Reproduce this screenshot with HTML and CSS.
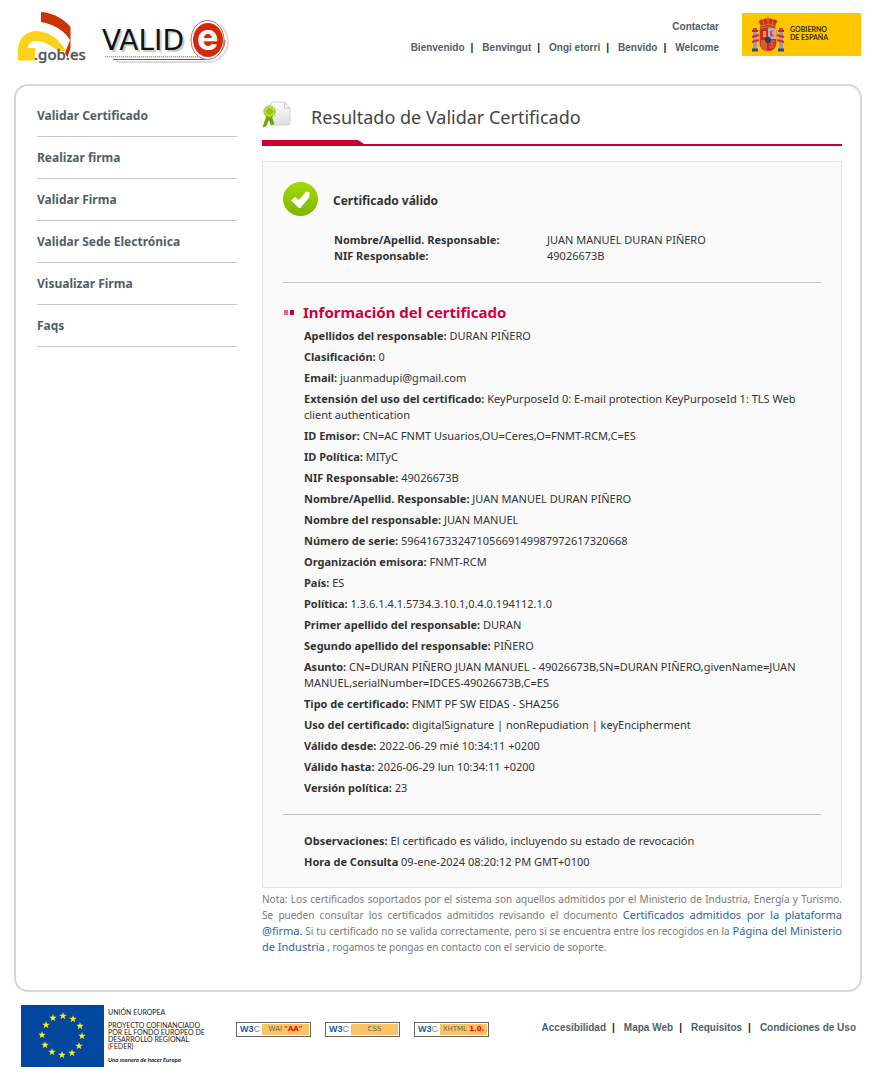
FILE: index.html
```html
<!DOCTYPE html>
<html lang="es">
<head>
<meta charset="utf-8">
<title>Valide - Resultado de Validar Certificado</title>
<link rel="stylesheet" href="styles.css">
</head>
<body>
<div class="page">
  <header class="header">
    <div class="logos">
      <svg class="logo-gob" width="76" height="56" viewBox="14 8 76 56" role="img" aria-label=".gob.es">
        <path d="M41 12C54 13 64 19 70.500 27V48L67.500 57.500L65 53L70 40C65 31 54 24 41 22Z" fill="#c93502"/>
        <path d="M18 60.500V49C19 37 27 31 37 31C50 32 60 40 66 51H58C51 45 43 41 37 41C31 41 28 44 28 48H35V60.500Z" fill="#f8d21c"/>
        <text x="34" y="60" class="gob-text">.gob.es</text>
      </svg>
      <svg class="logo-valide" width="132" height="56" viewBox="98 12 132 56" role="img" aria-label="VALIDe">
        <path d="M116 62H210C220 61 228 51 228 42C228 34 224 27 219 24" fill="none" stroke="#dcdcdc" stroke-width="2"/>
        <text x="104" y="52" class="valid-text valid-shadow">VALID</text>
        <text x="102" y="50" class="valid-text">VALID</text>
        <path d="M105 56.500H199" fill="none" stroke="#d98a7c" stroke-dasharray="1 1"/>
        <path d="M105 57H199" fill="none" stroke="#d98a7c" stroke-width=".6"/>
        <path d="M113 59.500H207C218 58 225 49 225 40" fill="none" stroke="#a8483a"/>
        <ellipse cx="207.500" cy="40" rx="16.500" ry="19.500" fill="#fff" stroke="#c06a5c"/>
        <ellipse cx="208" cy="40" rx="15" ry="17" fill="#d22a08"/>
        <text x="197" y="50" class="e-text">e</text>
      </svg>
    </div>
    <div class="header-right">
      <nav class="top-links" aria-label="Idiomas">
        <a href="#">Contactar</a>
        <ul class="link-row">
          <li><a href="#">Bienvenido</a></li><li><a href="#">Benvingut</a></li><li><a href="#">Ongi etorri</a></li><li><a href="#">Benvido</a></li><li><a href="#">Welcome</a></li>
        </ul>
      </nav>
      <svg class="gobierno" width="119" height="43" viewBox="0 0 119 43" role="img" aria-label="Gobierno de España">
        <path fill="#ffc600" d="M0 0H119V43H0Z"/>
        <path d="M18 16Q26 13 34 16V31Q33 38 26 38Q19 38 18 31Z" fill="#d8232e" stroke="#8b5b4a" stroke-width=".7"/>
        <path d="M26 15Q30 14 34 16V26H26Z" fill="#b9aeb4"/>
        <path d="M21 18H24V24H21Z" fill="#e9a51c"/>
        <path d="M28 18L31 17L30 20L32 23L28 24Z" fill="#d04a6a"/>
        <path d="M20 27V35M22 27V37M24 27V38" stroke="#f3ad1b" stroke-width=".8"/>
        <path d="M27 28H33M27 31H33M27 34H32M28 27L32 35M32 27L28 35" stroke="#e4862b" stroke-width=".6"/>
        <circle cx="26" cy="27" r="3" fill="#174475"/>
        <path d="M18 15L19 12L17 9Q18 6 21 7Q23 5 26 6Q29 5 31 7Q35 6 35 9L33 12V15Q26 12 18 15Z" fill="#d62a24" stroke="#8b5a18" stroke-width=".7"/>
        <path d="M26 3V11M21 8L22 12M31 8L30 12M18 13Q26 10 34 13" stroke="#c98218" fill="none"/>
        <path d="M11 18H15V36H11ZM37 18H41V36H37Z" fill="#a99aa0"/>
        <path d="M10 18H16M36 18H42M10 24L17 22M35 22L42 24M10 29L17 27M35 27L42 29" stroke="#d8232e" stroke-width="2"/>
        <path d="M10 37H16M36 37H42" stroke="#235489" stroke-width="3"/>
        <path d="M11 15H15V17H11ZM37 15H41V17H37Z" fill="#b55a21"/>
        <text x="48" y="19" class="spain-text">GOBIERNO</text>
        <text x="48" y="27" class="spain-text">DE ESPAÑA</text>
      </svg>
    </div>
  </header>

  <div class="shell">
    <nav class="menu" aria-label="Principal">
      <a href="#">Validar Certificado</a>
      <a href="#">Realizar firma</a>
      <a href="#">Validar Firma</a>
      <a href="#">Validar Sede Electrónica</a>
      <a href="#">Visualizar Firma</a>
      <a href="#">Faqs</a>
    </nav>
    <main class="content">
      <div class="title-row">
        <svg width="30" height="28" viewBox="0 0 30 28" aria-hidden="true">
          <defs><linearGradient id="paper" x2="0" y2="1"><stop stop-color="#fff"/><stop offset="1" stop-color="#dedede"/></linearGradient></defs>
          <path d="M9 3Q9 1 11 1H22L28 7V22Q28 24 26 24H11Q9 24 9 22Z" fill="url(#paper)" stroke="#d0d0d0"/>
          <path d="M22 1Q24 4 22 7H28Z" fill="#fafafa" stroke="#c7c7c7"/>
          <path d="M5 14L1 26L4 25L7 18L9 24L12 23L9 14Z" fill="#71a700" stroke="#5a9000" stroke-width=".6"/>
          <circle cx="7.500" cy="10.500" r="5.300" fill="#a4d424" stroke="#9aca30" stroke-width="2" stroke-dasharray="1.400 .8"/>
          <circle cx="7.500" cy="10.500" r="4" fill="#8fc900" stroke="#d8ef80" stroke-width=".8"/>
        </svg>
        <h1>Resultado de Validar Certificado</h1>
      </div>
      <div class="title-bar"></div>
      <section class="panel">
        <div class="status">
          <svg width="36" height="36" viewBox="0 0 36 36" aria-hidden="true">
            <defs><linearGradient id="ok" x2="0" y2="1"><stop stop-color="#a5dc00"/><stop offset="1" stop-color="#80b400"/></linearGradient></defs>
            <ellipse cx="17.500" cy="17" rx="17.500" ry="17" fill="url(#ok)"/>
            <path d="M8 18.500L12 15L16 18L23 9.500L26.500 10V15L17.500 26H16Z" fill="#fff"/>
          </svg>
          <h2>Certificado válido</h2>
        </div>
        <dl class="holder">
          <dt>Nombre/Apellid. Responsable:</dt><dd>JUAN MANUEL DURAN PIÑERO</dd>
          <dt>NIF Responsable:</dt><dd>49026673B</dd>
        </dl>
        <hr>
        <h3>Información del certificado</h3>
        <ul class="fields">
          <li><b>Apellidos del responsable:</b> DURAN PIÑERO</li>
          <li><b>Clasificación:</b> 0</li>
          <li><b>Email:</b> juanmadupi@gmail.com</li>
          <li><b>Extensión del uso del certificado:</b> KeyPurposeId 0: E-mail protection KeyPurposeId 1: TLS Web client authentication</li>
          <li><b>ID Emisor:</b> CN=AC FNMT Usuarios,OU=Ceres,O=FNMT-RCM,C=ES</li>
          <li><b>ID Política:</b> MITyC</li>
          <li><b>NIF Responsable:</b> 49026673B</li>
          <li><b>Nombre/Apellid. Responsable:</b> JUAN MANUEL DURAN PIÑERO</li>
          <li><b>Nombre del responsable:</b> JUAN MANUEL</li>
          <li><b>Número de serie:</b> 596416733247105669149987972617320668</li>
          <li><b>Organización emisora:</b> FNMT-RCM</li>
          <li><b>País:</b> ES</li>
          <li><b>Política:</b> 1.3.6.1.4.1.5734.3.10.1,0.4.0.194112.1.0</li>
          <li><b>Primer apellido del responsable:</b> DURAN</li>
          <li><b>Segundo apellido del responsable:</b> PIÑERO</li>
          <li><b>Asunto:</b> CN=DURAN PIÑERO JUAN MANUEL - 49026673B,SN=DURAN PIÑERO,givenName=JUAN MANUEL,serialNumber=IDCES-49026673B,C=ES</li>
          <li><b>Tipo de certificado:</b> FNMT PF SW EIDAS - SHA256</li>
          <li><b>Uso del certificado:</b> digitalSignature | nonRepudiation | keyEncipherment</li>
          <li><b>Válido desde:</b> 2022-06-29 mié 10:34:11 +0200</li>
          <li><b>Válido hasta:</b> 2026-06-29 lun 10:34:11 +0200</li>
          <li><b>Versión política:</b> 23</li>
        </ul>
        <hr>
        <ul class="fields">
          <li><b>Observaciones:</b> El certificado es válido, incluyendo su estado de revocación</li>
          <li><b>Hora de Consulta</b> 09-ene-2024 08:20:12 PM GMT+0100</li>
        </ul>
      </section>
      <p class="note">Nota: Los certificados soportados por el sistema son aquellos admitidos por el Ministerio de Industria, Energía y Turismo. Se pueden consultar los certificados admitidos revisando el documento <a href="#">Certificados admitidos por la plataforma @firma.</a> Si tu certificado no se valida correctamente, pero si se encuentra entre los recogidos en la <a href="#">Página del Ministerio de Industria</a> , rogamos te pongas en contacto con el servicio de soporte.</p>
    </main>
  </div>

  <footer class="footer">
    <svg class="feder" width="190" height="62" viewBox="0 0 190 62" role="img" aria-label="Unión Europea, FEDER">
      <defs><path id="star" d="M0-4L.9-1.200H3.800L1.500.5L2.400 3.200L0 1.500L-2.400 3.200L-1.500.5L-3.800-1.200H-.9Z" fill="#ffed16"/></defs>
      <path fill="#00479d" d="M0 0H83V62H0Z"/>
      <use href="#star" x="42" y="11"/><use href="#star" x="52" y="14"/><use href="#star" x="59" y="21"/><use href="#star" x="61" y="31"/><use href="#star" x="58" y="41"/><use href="#star" x="51" y="48"/><use href="#star" x="41" y="50"/><use href="#star" x="31" y="47"/><use href="#star" x="24" y="40"/><use href="#star" x="21" y="30"/><use href="#star" x="25" y="20"/><use href="#star" x="32" y="13"/>
      <g class="feder-text">
        <text x="87" y="10">UNIÓN EUROPEA</text>
        <text x="87" y="23">PROYECTO COFINANCIADO</text>
        <text x="87" y="30">POR EL FONDO EUROPEO DE</text>
        <text x="87" y="37">DESARROLLO REGIONAL</text>
        <text x="87" y="44">(FEDER)</text>
        <text x="87" y="57" class="motto">Una manera de hacer Europa</text>
      </g>
    </svg>
    <div class="badges">
      <a class="badge" href="#"><span class="w3c">W3<i>C</i></span><span class="tag">WAI <em>"AA"</em></span></a>
      <a class="badge" href="#"><span class="w3c">W3<i>C</i></span><span class="tag">CSS</span></a>
      <a class="badge" href="#"><span class="w3c">W3<i>C</i></span><span class="tag">XHTML <em>1.0.</em></span></a>
    </div>
    <ul class="link-row">
      <li><a href="#">Accesibilidad</a></li><li><a href="#">Mapa Web</a></li><li><a href="#">Requisitos</a></li><li><a href="#">Condiciones de Uso</a></li>
    </ul>
  </footer>
</div>
</body>
</html>
```
FILE: styles.css
```css
* { box-sizing: border-box; }
body { margin: 0; background: #fff; color: #333; font: 11px/16px "Noto Sans", sans-serif; }
a { text-decoration: none; }
ul, dl, dd, h1, h2, h3, p { margin: 0; padding: 0; }
ul { list-style: none; }
svg { display: block; flex: none; }
.page { padding: 0 26px 16px 14px; }

.header { display: flex; justify-content: space-between; min-height: 84px; padding: 8px 1px 0 0; }
.logos { display: flex; gap: 8px; }
.logo-valide { margin-top: 4px; }
.header-right { display: flex; align-items: flex-start; gap: 23px; padding-top: 5px; }
.top-links { display: flex; flex-direction: column; align-items: flex-end; gap: 5px; padding-top: 6px; }
.top-links, .link-row { font: bold 10px/16px "Liberation Sans", sans-serif; }
.top-links a, .link-row a { color: #4f5f68; }
.link-row { display: flex; }
.link-row li + li::before { content: "|"; color: #222; margin: 0 9px 0 6px; }

.gob-text { font: 500 15px "Noto Sans", sans-serif; fill: #555; stroke: #555; stroke-width: .3px; }
.valid-text { font: 28px "DejaVu Sans", sans-serif; fill: #111; }
.valid-shadow { fill: #cfcfcf; }
.e-text { font: bold 36px Inter, sans-serif; fill: #fff; }
.spain-text { font: bold 7px Lato, sans-serif; fill: #332b10; }

.shell { display: flex; align-items: flex-start; gap: 25px; min-height: 908px; padding: 0 18px 35px 21px; border: 2px solid #d7d7d7; border-radius: 14px; }
.menu { flex: 0 0 200px; padding-top: 9px; }
.menu a { display: block; padding: 13px 0 12px; border-bottom: 1px solid #c6c6c6; color: #4f5f68; font-size: 12px; font-weight: bold; }
.content { flex: 1; min-width: 0; }
.title-row { display: flex; align-items: center; gap: 19px; height: 54px; }
.title-row svg { margin-top: 3px; }
h1 { color: #444; font-size: 18px; line-height: 24px; font-weight: normal; padding-top: 8px; }
.title-bar { height: 6px; border-bottom: 2px solid #cc0033; }
.title-bar::before { content: ""; display: block; width: 102px; height: 4px; background: #cc0033; clip-path: polygon(0 0, 96px 0, 100% 100%, 0 100%); }
.panel { margin-top: 15px; padding: 20px 20px 17px; border: 1px solid #e4e4e4; background: #fafafa; }
.status { display: flex; align-items: center; gap: 14px; }
h2 { padding-top: 2px; font-size: 12px; line-height: 16px; }
.holder { display: grid; grid-template-columns: 213px 1fr; margin: 14px 0 18px 51px; }
.holder dt { font-weight: bold; }
hr { height: 1px; margin: 0; border: 0; background: #c4c4c4; }
h3 { display: flex; align-items: center; margin-top: 19px; color: #d0003f; font-size: 15px; line-height: 20px; }
h3::before { content: ""; width: 10px; height: 5px; margin: 0 9px 0 1px; background: linear-gradient(90deg, #e0668c 4px, transparent 4px 6px, #cc0033 6px); }
.fields { display: grid; gap: 5px; margin: 18px 21px 0; }
h3 + .fields { margin: 6px 21px 18px; }
.note { margin-top: 3px; color: #777; font-size: 10px; text-align: justify; }
.note a { color: #2a64a5; font-size: 11px; }

.footer { display: flex; align-items: flex-start; padding: 13px 6px 0 7px; }
.badges { display: flex; gap: 14px; margin: 17px auto 0 25px; }
.badge { display: flex; width: 75px; height: 15px; padding: 1px; border: 1px solid #666; background: #fff; }
.w3c { flex: none; width: 24px; padding-left: 2px; color: #1e5a9e; font: bold 9px/11px "Liberation Sans", sans-serif; }
.w3c i { color: #888; font-style: normal; font-weight: normal; }
.tag { flex: 1; background: #f9c464; color: #666; font: 7px/11px "DejaVu Sans", sans-serif; text-align: center; white-space: nowrap; }
.tag em { color: #f00; font-style: normal; font-weight: bold; }
.footer .link-row { padding-top: 15px; }
.feder-text { font: 7px Lato, sans-serif; fill: #222; }
.motto { font: italic bold 6px Lato, sans-serif; }
```
